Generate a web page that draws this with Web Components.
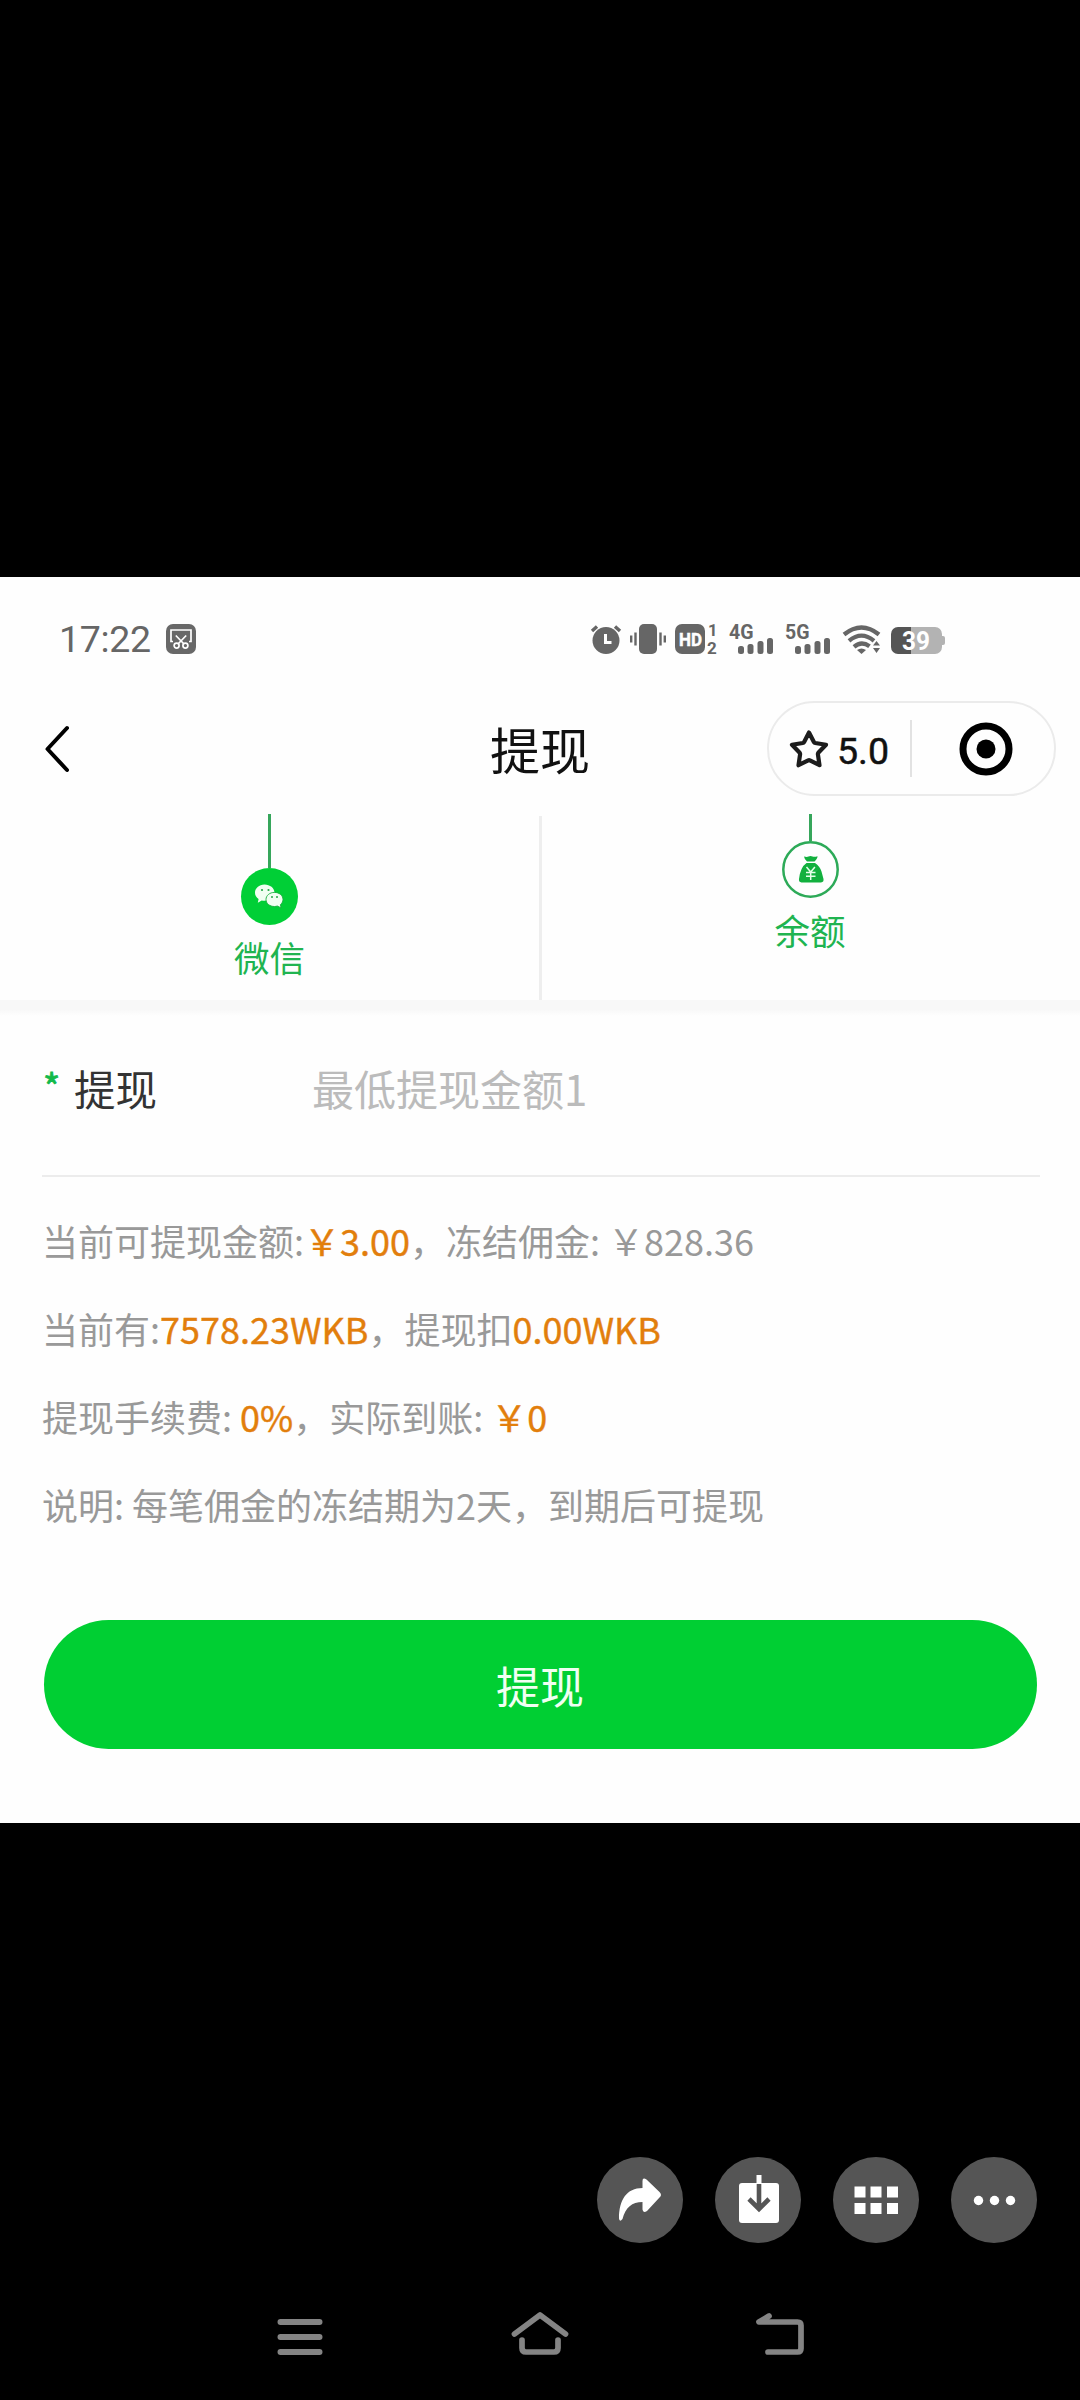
<!DOCTYPE html>
<html lang="zh-CN">
<head>
<meta charset="utf-8">
<title>提现</title>
<style>
html,body{margin:0;background:#000}
body{width:1080px;height:2400px;overflow:hidden;font-family:"Noto Sans CJK SC","Noto Sans",sans-serif}
</style>
</head>
<body>
<withdraw-screen></withdraw-screen>
<script>
const define = (name, css, html) => customElements.define(name, class extends HTMLElement {
  constructor() {
    super();
    this.attachShadow({ mode: 'open' }).innerHTML =
      `<style>:host,*{box-sizing:border-box}svg{display:block;flex:none;overflow:visible}${css}</style>${html}`;
  }
});

define('status-bar', `
:host{display:flex;height:124px;padding:47px 135px 0 59px;align-items:flex-start;color:#666;font-family:Roboto,sans-serif}
.time{font-size:37.5px;line-height:30px;height:30px;width:107px;letter-spacing:-.3px;white-space:nowrap}
.right{display:flex;margin-left:auto}
text{font-family:Roboto,sans-serif;font-weight:700}
`, `
<div class="time">17:22</div>
<svg width="30" height="30" viewBox="0 0 30 30"><rect width="30" height="30" rx="7" fill="#686868"/><g fill="none" stroke="#fff" stroke-width="1.7"><path d="M7 17.5H5V6H25V17.5H23"/><path d="M9.8 11.5 18 20M20.2 11.5 12 20"/><circle cx="10.6" cy="21.6" r="2.5"/><circle cx="19.4" cy="21.6" r="2.5"/></g></svg>
<div class="right">
<svg width="30" height="30" viewBox="1 0 30 30"><circle cx="15" cy="16.5" r="13.5" fill="#666"/><path d="M1 7 6 2.5M24 2.5 29 7" stroke="#666" stroke-width="3.4"/><path d="M14.500 10v8.500h6" fill="none" stroke="#fff" stroke-width="3"/></svg>
<svg width="36" height="30" viewBox="0 0 36 30" style="margin-left:8px"><rect x="9" width="18" height="30" rx="5" fill="#666"/><path d="M1.2 11.5v7M5.5 8.500v13M30.500 8.500v13M34.800 11.500v7" stroke="#666" stroke-width="2.4"/></svg>
<svg width="42" height="30" viewBox="0 0 42 30" style="margin-left:9px"><rect width="30" height="30" rx="7" fill="#666"/><text x="4" y="21.500" font-size="18.500" fill="#fff" stroke="#fff" stroke-width=".5" textLength="23" lengthAdjust="spacingAndGlyphs">HD</text><text x="33" y="12" font-size="16.500" fill="#666">1</text><text x="32" y="29.500" font-size="17" fill="#666">2</text></svg>
<svg width="44" height="30" viewBox="0 0 44 30" style="margin-left:12px"><text x="0" y="14.500" font-size="20" fill="#666" textLength="24.500" lengthAdjust="spacingAndGlyphs">4G</text><g fill="#666"><rect x="9" y="22" width="6" height="8" rx="2.500"/><rect x="18.500" y="20" width="6" height="10" rx="2.500"/><rect x="28.500" y="17" width="6" height="13" rx="2.500"/><rect x="38" y="14" width="6" height="16" rx="2.500"/></g></svg>
<svg width="45" height="30" viewBox="0 0 45 30" style="margin-left:12px"><text x="0" y="14.500" font-size="20" fill="#666" textLength="24.500" lengthAdjust="spacingAndGlyphs">5G</text><g fill="#666"><rect x="10" y="22" width="6" height="8" rx="2.500"/><rect x="19.500" y="20" width="6" height="10" rx="2.500"/><rect x="29.500" y="17" width="6" height="13" rx="2.500"/><rect x="39" y="14" width="6" height="16" rx="2.500"/></g></svg>
<svg width="37" height="30" viewBox="0 0 37 30" style="margin-left:13px"><g fill="none" stroke="#666" stroke-width="4.300"><path d="M1 10.500Q18.500-3.500 36 10.500"/><path d="M6 16.800Q18.500 6.500 31 16.800"/><path d="M11 22.800Q18.500 16.500 26.500 22.300"/></g><path d="M14 26q4.500-3 9 0l-4.500 4ZM30 21.500l3.500-4.500 3.500 4.500ZM30 24h7l-3.500 5Z" fill="#666"/></svg>
<svg width="54" height="30" viewBox="0 0 54 30" style="margin-left:11px"><path d="M20 3H44a7 7 0 0 1 7 7V23a7 7 0 0 1-7 7H20Z" fill="#b3b3b3"/><path d="M51 12h1q2 0 2 2v5q0 2-2 2h-1Z" fill="#b3b3b3"/><path d="M7 3H20V30H7a7 7 0 0 1-7-7V10a7 7 0 0 1 7-7Z" fill="#555"/><text x="11" y="25.500" font-size="25" fill="#fff" textLength="28" lengthAdjust="spacingAndGlyphs">39</text></svg>
</div>`);

define('score-capsule', `
:host{display:flex;align-items:center;width:289px;height:95px;border:2px solid #ebebeb;border-radius:48px;font-family:Roboto,sans-serif}
.score{display:flex;align-items:center;gap:8px;width:141px;padding-left:20px;font-size:37.500px;font-weight:400;-webkit-text-stroke:.5px #111;color:#111;line-height:44px}
.score span{padding-top:4px}
.sep{width:2px;height:57px;background:#e2e2e2}
.close{flex:1;display:flex;justify-content:center;padding:1px 0 0 5px}
`, `
<div class="score"><svg width="40" height="40" viewBox="0 0 40 40"><path d="M20 3.500 25 13.200Q25.400 13.900 26.200 14L37 15.800 29.300 23.800Q28.800 24.400 28.900 25.200L30.500 36.200 20.900 31.400Q20 31 19.200 31.400L9.500 36.200 11.100 25.200Q11.200 24.400 10.700 23.800L3 15.800 13.800 14Q14.600 13.900 15 13.200Z" fill="none" stroke="#1c1c1c" stroke-width="4.200" stroke-linejoin="round"/></svg><span>5.0</span></div>
<div class="sep"></div>
<div class="close"><svg width="54" height="54" viewBox="0 0 54 54"><circle cx="27" cy="27" r="23" fill="none" stroke="#000" stroke-width="7"/><circle cx="27" cy="27" r="9.500"/></svg></div>`);

define('title-bar', `
:host{display:grid;grid-template-columns:1fr auto 1fr;align-items:center;height:95px;padding:0 24px}
svg{margin:1px 0 0 20px}
h1{margin:0;padding-bottom:1px;font-size:50px;line-height:60px;font-weight:400;color:#111}
score-capsule{justify-self:end}
`, `
<svg width="26" height="48" viewBox="0 0 26 48"><path d="M23 3 3.500 24 23 45" fill="none" stroke="#000" stroke-width="4" stroke-linecap="round" stroke-linejoin="round"/></svg>
<h1>提现</h1>
<score-capsule></score-capsule>`);

define('pay-tab', `
:host{display:flex;flex-direction:column;align-items:center;width:540px;color:#20b450;font-size:35.500px;line-height:44px}
.line{width:3px;height:var(--drop);background:#36a65b}
.name{margin-top:10px}
`, `<div class="line"></div><slot name="icon"></slot><div class="name"><slot></slot></div>`);

define('pay-tabs', `
:host{display:flex;height:204px;padding-top:18px}
.divider{width:3px;margin:2px -1.500px 0;background:#eee;height:184px}
.left{--drop:54px;padding-right:1px}.right{--drop:27px}
`, `
<pay-tab class="left"><svg slot="icon" width="57" height="57" viewBox="0 0 57 57"><circle cx="28.500" cy="28.500" r="28.500" fill="#00cf36"/><path d="M23.500 16.500c-5.500 0-9.500 3.700-9.500 8.300 0 2.700 1.400 4.800 3.600 6.300l-.8 3.600 3.900-2.300c1 .3 1.800.3 2.800.3 5.500 0 10-3.400 10-8s-4.500-8.200-10-8.200Z" fill="#f1fff2"/><path d="M33.500 24.400c-4.800 0-8.500 3.100-8.500 7.100s3.700 7 8.500 7c1.100 0 1.900-.2 2.800-.5l3.800 1.900-.7-3.200c1.600-1.400 2.600-3.200 2.600-5.200 0-4-3.700-7.100-8.500-7.100Z" fill="#f1fff2" stroke="#19ae3d" stroke-width=".9"/><g fill="#25a847"><circle cx="21" cy="22" r="1.100"/><circle cx="27.500" cy="22" r="1.100"/><circle cx="31" cy="29" r="1"/><circle cx="36" cy="29" r="1"/></g></svg>微信</pay-tab>
<div class="divider"></div>
<pay-tab class="right"><svg slot="icon" width="57" height="57" viewBox="0 0 57 57"><circle cx="28.500" cy="28.500" r="27.200" fill="none" stroke="#2daa58" stroke-width="2.500"/><path d="M22 15.500q3 .8 4.500 0 2-.8 4 0 2 .8 5-.3.3 2-3 5.400h-7.500Q22.300 18 22 15.500ZM24.500 22h8.500q5 3.500 6.500 8.500l2 7.500q.5 3-2.500 3.500H19.500q-3-.5-2.500-3.500 1.500-12 7.500-16Z" fill="#12b03e"/><path d="m24.500 26 4.200 5 4.200-5M28.700 31v8M24 31.500h9.500M24 35.200h9.500" fill="none" stroke="#e4ffe9" stroke-width="1.500"/></svg>余额</pay-tab>`);

define('amount-field', `
:host{display:flex;align-items:center;margin:0 40px 0 42px;height:161px;padding-bottom:16px;border-bottom:2px solid #ececec;font-size:41.500px;line-height:60px}
.star{width:32px;color:#12b94a;font-size:37px;padding-left:1px;line-height:60px;-webkit-text-stroke:.8px #12b94a;padding-bottom:6px}
.label{width:238px;color:#333}
.hint{color:#bbb;font-size:42px}
`, `<div class="star">*</div><div class="label"><slot name="label"></slot></div><div class="hint"><slot></slot></div>`);

define('info-line', `
:host{display:block;height:88px;line-height:88px;font-size:36px;color:#999;white-space:pre}
::slotted(b){font-weight:400;color:#e27e0c;-webkit-text-stroke:.4px #e27e0c}
`, `<slot></slot>`);

define('primary-button', `
:host{display:flex;align-items:center;justify-content:center;margin:0 43px 0 44px;height:129px;border-radius:65px;background:#00cf33;color:#f0fff2;font-size:44px;line-height:60px;padding:1px 1px 0 0}
`, `<slot></slot>`);

define('round-action', `
:host{display:flex;width:86px;height:86px;border-radius:50%;background:#555}
`, `<slot></slot>`);

define('viewer-actions', `
:host{display:flex;justify-content:flex-end;gap:32px;padding:334px 43px 0 0}
`, `
<round-action><svg width="86" height="86" viewBox="0 0 86 86"><path d="M45.500 31V24q0-4 4-1.500l13 12.500q3 3 0 5.500L50 54q-4 2.500-4.500-1.500v-7.500C35 45 28.500 50.500 25.500 62q-3 3.500-3.500-.5C22 43 29.500 31 45.500 31Z" fill="#fff"/></svg></round-action>
<round-action><svg width="86" height="86" viewBox="0 0 86 86"><rect x="24" y="26" width="40" height="40" rx="3" fill="#fff"/><path d="M44 27V52M34 42l10 10 10-10" fill="none" stroke="#555" stroke-width="4.600"/><path d="M44 18v9" stroke="#fff" stroke-width="5"/></svg></round-action>
<round-action><svg width="86" height="86" viewBox="0 0 86 86"><path fill="#fff" d="M21.500 29.500h11v11h-11zM37.500 29.500h11v11h-11zM54 29.500h11v11H54zM21.500 46h11v11h-11zM37.500 46h11v11h-11zM54 46h11v11H54z"/></svg></round-action>
<round-action><svg width="86" height="86" viewBox="0 0 86 86"><g fill="#fff"><circle cx="27.500" cy="43.500" r="4.700"/><circle cx="43.500" cy="43.500" r="4.700"/><circle cx="59.500" cy="43.500" r="4.700"/></g></svg></round-action>`);

define('system-nav', `
:host{display:flex;justify-content:space-between;padding:67px 274px 0 276px}
`, `
<svg width="48" height="48" viewBox="276 2310 48 48"><path d="M280.500 2322H319.500M280.500 2337H319.500M280.500 2352H319.500" stroke="#848484" stroke-width="6" stroke-linecap="round"/></svg>
<svg width="60" height="48" viewBox="510 2310 60 48"><g fill="none" stroke="#848484" stroke-width="5.700" stroke-linecap="round" stroke-linejoin="round"><path d="M514.500 2334 540 2315 565.500 2334"/><path d="M522 2340V2348Q522 2352 526 2352H554Q558 2352 558 2348V2340"/></g></svg>
<svg width="51" height="48" viewBox="755 2310 51 48"><path d="M769 2316 759 2322H797.500Q801 2322 801 2325.500V2348.500Q801 2352 797.500 2352H768" fill="none" stroke="#848484" stroke-width="5.700" stroke-linecap="round" stroke-linejoin="round"/><path d="M759 2322 769 2316V2322Z" fill="#848484"/></svg>`);

define('withdraw-screen', `
:host{display:flex;flex-direction:column;width:1080px;height:2400px;background:#000;padding-top:577px}
main{height:1246px;background:#fefefe;display:flex;flex-direction:column;flex:none}
.band{height:16px;background:linear-gradient(#f8f8f8 60%,#fefefe);flex:none}
.info{padding:19px 0 0 42px;height:443px}
`, `
<main>
<status-bar></status-bar>
<title-bar></title-bar>
<pay-tabs></pay-tabs>
<div class="band"></div>
<amount-field><span slot="label">提现</span>最低提现金额1</amount-field>
<div class="info">
<info-line>当前可提现金额:<b>￥3.00</b>，冻结佣金: ￥828.36</info-line>
<info-line>当前有:<b>7578.23WKB</b>，提现扣<b>0.00WKB</b></info-line>
<info-line>提现手续费: <b>0%</b>，实际到账: <b>￥0</b></info-line>
<info-line>说明: 每笔佣金的冻结期为2天，到期后可提现</info-line>
</div>
<primary-button>提现</primary-button>
</main>
<viewer-actions></viewer-actions>
<system-nav></system-nav>`);
</script>
</body>
</html>
